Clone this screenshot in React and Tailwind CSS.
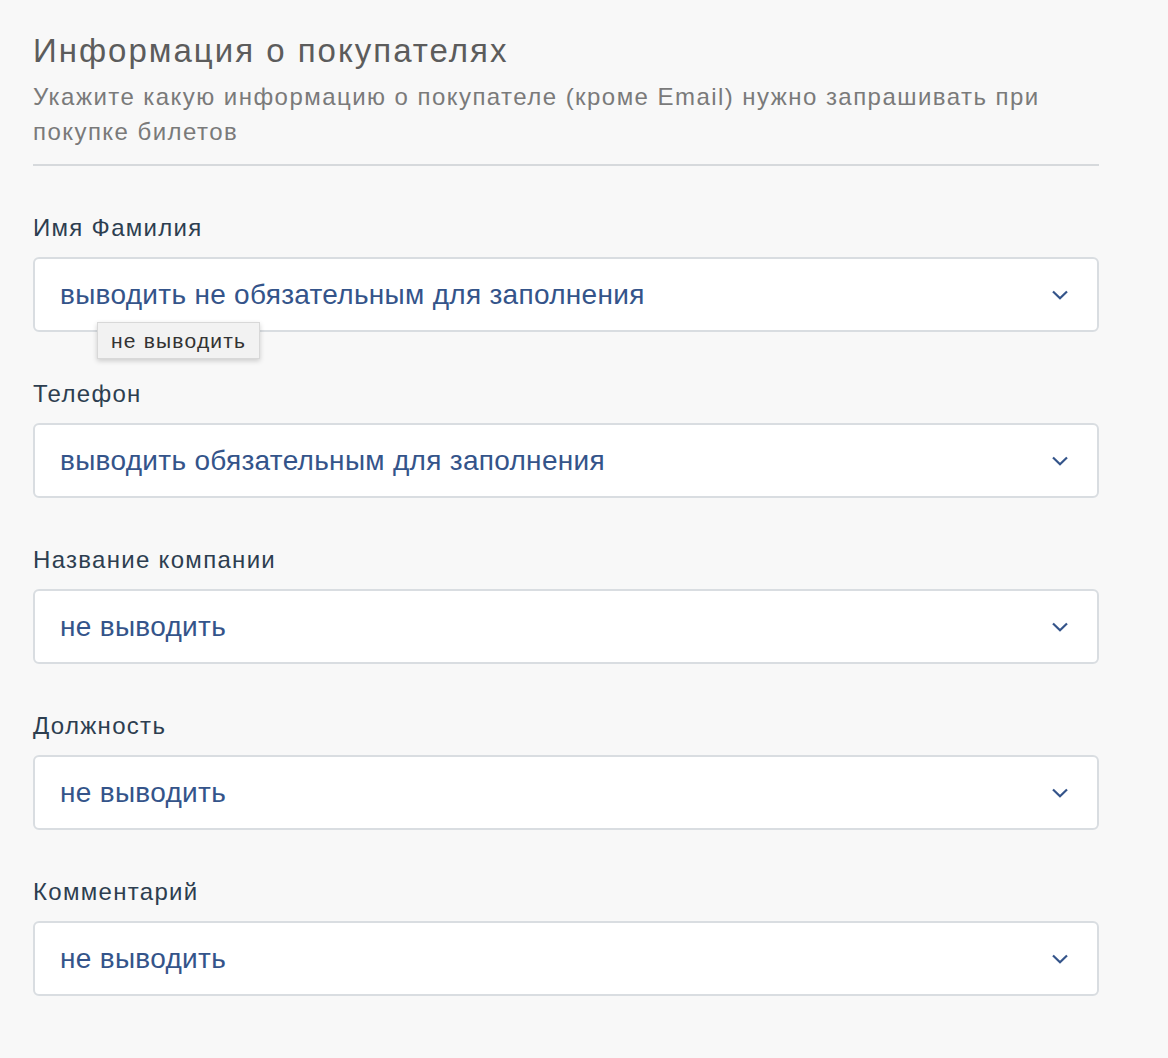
import { useState } from 'react'

const fields = [
    { label: 'Имя Фамилия', value: 'выводить не обязательным для заполнения', tip: true },
    { label: 'Телефон', value: 'выводить обязательным для заполнения' },
    { label: 'Название компании', value: 'не выводить' },
    { label: 'Должность', value: 'не выводить' },
    { label: 'Комментарий', value: 'не выводить' },
]

function Chevron() {
    return (
        <svg width="16" height="10" viewBox="0 0 16 10" fill="none">
            <path d="M1 1.5 L8 8.3 L15 1.5" stroke="#34548a" strokeWidth="2.2" />
        </svg>
    )
}

function SelectField({ label, value, tip }) {
    const [val] = useState(value)
    return (
        <div className="relative mt-[47px] first:mt-[49px]">
            <div className="text-[24px] leading-[30px] tracking-[1.3px] text-[#2d3e50] mb-[14px]">{label}</div>
            <div className="h-[75px] flex items-center justify-between border-2 border-[#d9dde1] rounded-[6px] bg-white pl-[25px] pr-[29px]">
                <span className="text-[28px] tracking-[0.3px] text-[#34548a]">{val}</span>
                <Chevron />
            </div>
            {tip && (
                <div className="absolute left-[64px] top-[109px] h-[37px] px-[13px] flex items-center bg-[#f2f2f2] border border-[#d8d8d8] shadow-[0_2px_5px_rgba(0,0,0,0.18)] text-[21px] text-[#333] tracking-[1.2px]">
                    не выводить
                </div>
            )}
        </div>
    )
}

export default function App() {
    return (
        <div className="min-h-[1058px] bg-[#f8f8f8] pt-[31px] pl-[33px] pb-10" style={{ fontFamily: '"Liberation Sans", Arial, sans-serif' }}>
            <div className="w-[1066px]">
                <h1 className="text-[33px] leading-[40px] tracking-[2px] text-[#5c5c5c]">Информация о покупателях</h1>
                <p className="mt-2 text-[24px] leading-[35px] tracking-[1.45px] text-[#7a7a7a]">
                    Укажите какую информацию о покупателе (кроме Email) нужно запрашивать при покупке билетов
                </p>
                <div className="mt-[15px] h-[2px] bg-[#d6d9dc]" />
                {fields.map((f) => (
                    <SelectField key={f.label} {...f} />
                ))}
            </div>
        </div>
    )
}
